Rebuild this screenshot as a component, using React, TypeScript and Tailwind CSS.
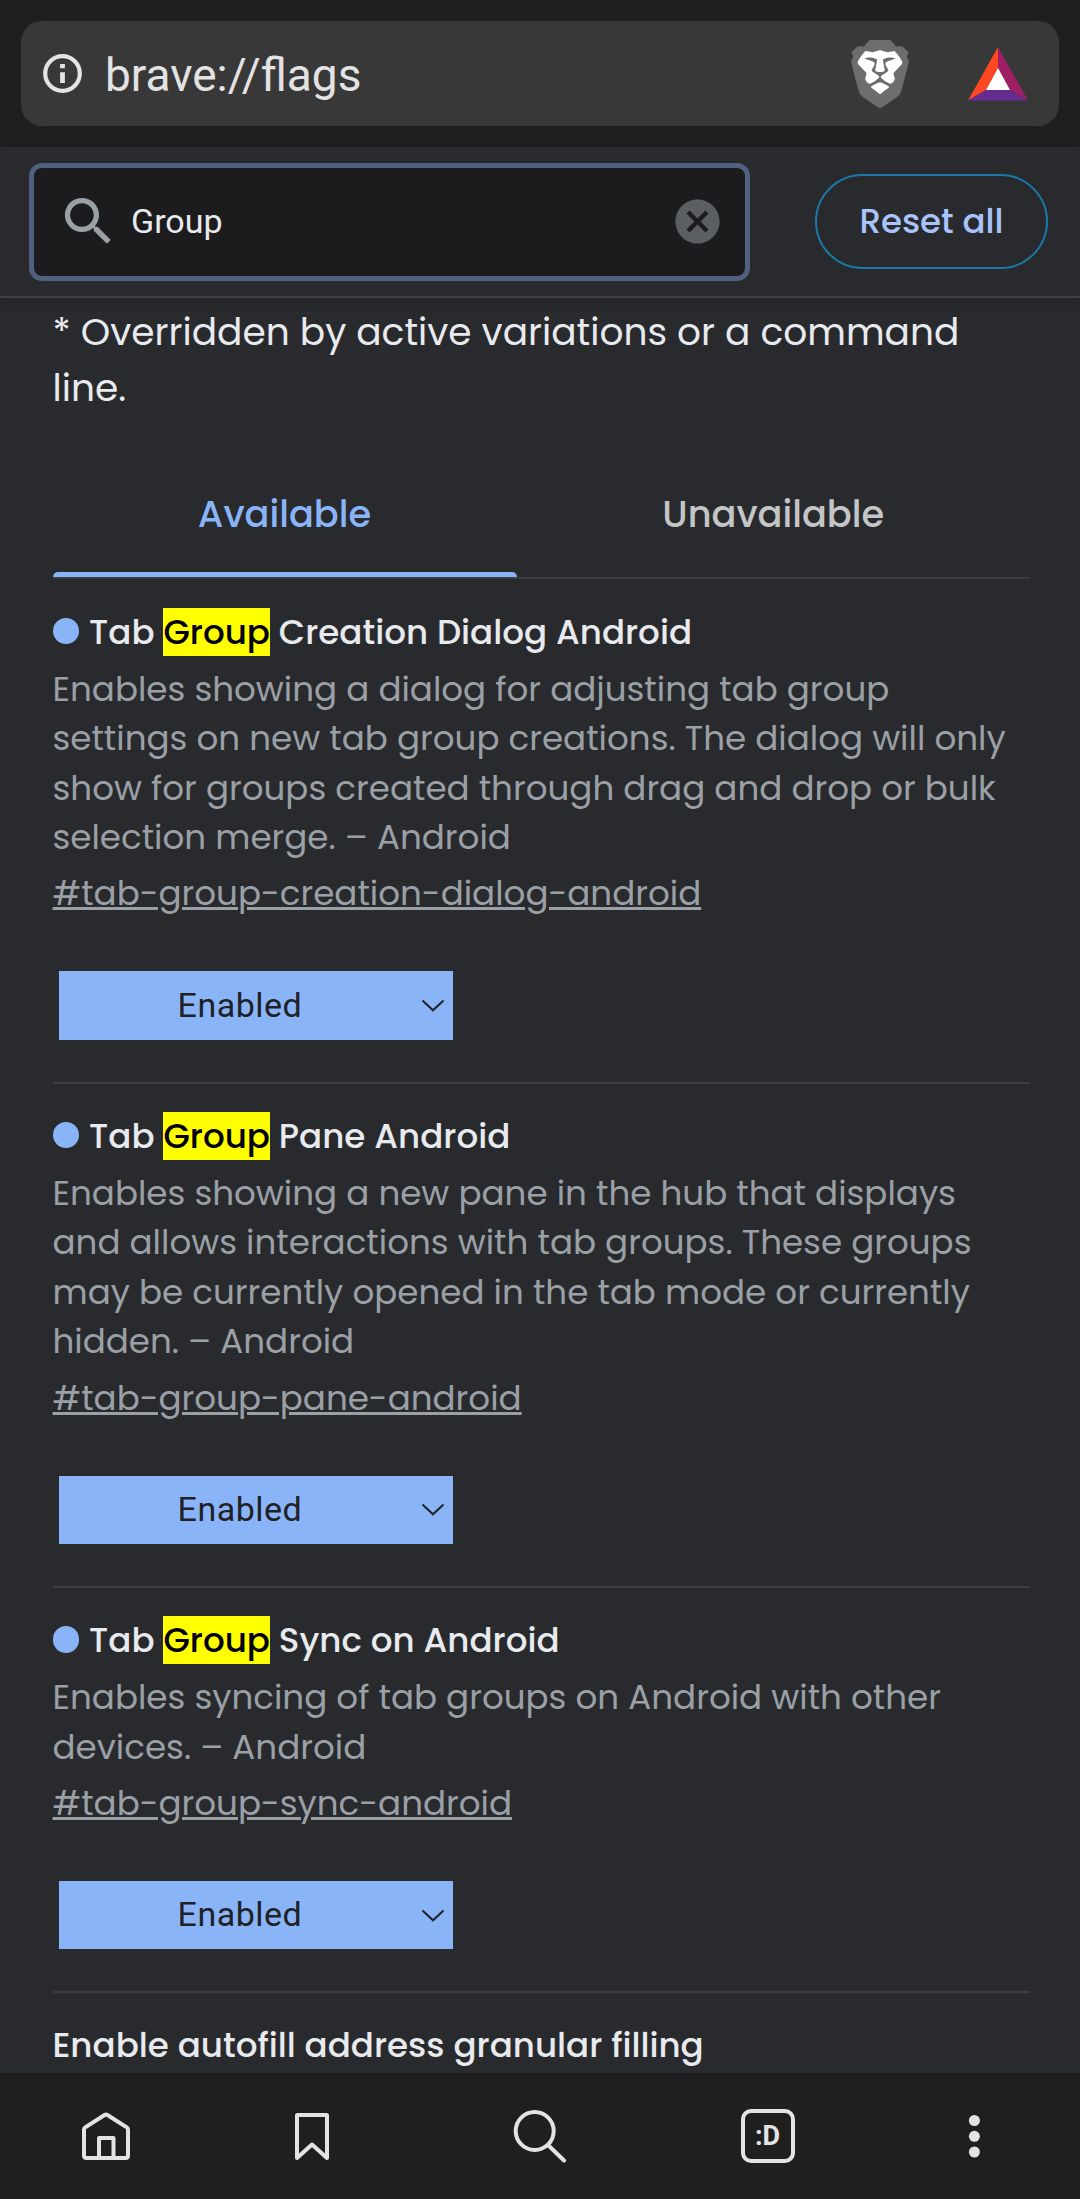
import { FaBrave } from "react-icons/fa6";
import { MdCancel, MdSearch } from "react-icons/md";

type Flag = { suffix: string; lines: string[]; id: string };

const flags: Flag[] = [
  {
    suffix: "Creation Dialog Android",
    lines: [
      "Enables showing a dialog for adjusting tab group",
      "settings on new tab group creations. The dialog will only",
      "show for groups created through drag and drop or bulk",
      "selection merge. – Android",
    ],
    id: "#tab-group-creation-dialog-android",
  },
  {
    suffix: "Pane Android",
    lines: [
      "Enables showing a new pane in the hub that displays",
      "and allows interactions with tab groups. These groups",
      "may be currently opened in the tab mode or currently",
      "hidden. – Android",
    ],
    id: "#tab-group-pane-android",
  },
  {
    suffix: "Sync on Android",
    lines: ["Enables syncing of tab groups on Android with other", "devices. – Android"],
    id: "#tab-group-sync-android",
  },
];

function AddressBar() {
  return (
    <div className="h-[147px] shrink-0 bg-[#1f1f1f] px-[21px] pt-[21px]">
      <div className="flex h-[105px] items-center rounded-[21px] bg-[#383838] pl-[21px] pr-[31px]">
        <svg className="size-[41px]" viewBox="0 0 41 41" fill="none">
          <circle cx="20.5" cy="20.5" r="17.3" stroke="#e3e3e3" strokeWidth="4.2" />
          <path d="M18.1 11h4.8v4.2h-4.8zM18.1 19.3h4.8v10.7h-4.8z" fill="#e3e3e3" />
        </svg>
        <span className="ml-[22px] pt-[3px] font-[Roboto,sans-serif] text-[46px] leading-none text-[#e3e3e3]">
          brave://flags
        </span>
        <div className="relative ml-auto size-[68px]">
          <svg className="absolute inset-0 size-full" viewBox="0 0 24 24">
            <path d="M6 3.2h12l3 4.3-1.8 7.5L12 20.5 4.8 15 3 7.5z" fill="#fff" />
          </svg>
          <FaBrave className="relative size-[68px] text-[#6d6d6d]" />
        </div>
        <svg className="ml-[54px] h-[54px] w-[60px]" viewBox="0 0 60 54">
          <path d="M30 0L0 53.5L18 43L30 21z" fill="#ff4724" />
          <path d="M30 0L60 53.5L42 43L30 21z" fill="#9e1f63" />
          <path d="M0 53.5L18 43h24l18 10.5z" fill="#662d91" />
          <path d="M30 21L42 43H18z" fill="#fff" />
        </svg>
      </div>
    </div>
  );
}

function SearchHeader() {
  return (
    <div className="relative z-10 flex h-[151px] shrink-0 items-start border-b-2 border-[#3e4042] bg-[#292a2d] shadow-[0_2px_10px_rgba(0,0,0,0.18)]">
      <div className="ml-[29px] mt-[15.5px] flex h-[118px] w-[721px] items-center rounded-[13px] border-[5px] border-[#50617f] bg-[#1c1c1e]">
        <MdSearch className="ml-[23px] size-[63px] text-[#9aa0a6]" />
        <span className="ml-[11px] pb-[1px] font-[Roboto,sans-serif] text-[34px] leading-none text-[#e8eaed]">
          Group
        </span>
        <MdCancel className="ml-auto mr-[21px] size-[53px] text-[#5b5e62]" />
      </div>
      <button className="ml-[65px] mt-[27px] h-[95px] w-[233px] rounded-full border-2 border-[#1a7aa8] pb-[2px] text-[34px] font-medium leading-none text-[#a8c4fa]">
        Reset all
      </button>
    </div>
  );
}

function FlagCard({ flag }: { flag: Flag }) {
  return (
    <section className="border-b-2 border-[#3c3d40] pt-[28.1px]">
      <h3 className="flex h-[49.4px] items-center text-[34.125px] font-medium leading-[49.4px] text-[#e8eaed]">
        <span className="mb-[3px] mr-[10.4px] size-[26.2px] rounded-full bg-[#8ab4f8]" />
        <span className="whitespace-pre">
          Tab <mark className="bg-[#ffff00] text-black">Group</mark> {flag.suffix}
        </span>
      </h3>
      <p className="mt-[7.6px] text-[34.125px] leading-[49.48px] text-[#9aa0a6]">
        {flag.lines.map((line) => (
          <span key={line} className="block whitespace-nowrap">
            {line}
          </span>
        ))}
      </p>
      <a className="mt-[6.7px] block h-[49.4px] text-[34.125px] leading-[49.4px] text-[#9aa0a6] underline decoration-[3px]">
        {flag.id}
      </a>
      <div className="mb-[42px] ml-[6.5px] mt-[52.6px] flex h-[68.6px] w-[394px] items-center bg-[#8ab4f8] pl-[118.6px] pr-[8.5px]">
        <span className="pb-[2px] font-[Roboto,sans-serif] text-[34px] leading-none tracking-[0.5px] text-[#202124]">
          Enabled
        </span>
        <svg className="ml-auto h-[13px] w-[24px]" viewBox="0 0 24 13" fill="none">
          <path d="M1.5 1.5L12 11.3L22.5 1.5" stroke="#202124" strokeWidth="2" />
        </svg>
      </div>
    </section>
  );
}

function BottomNav() {
  return (
    <nav className="grid h-[126px] shrink-0 grid-cols-[212px_199px_258px_198px_213px] place-items-center bg-[#1f1f1f] text-[#e3e3e3]">
      <svg className="size-[52px]" viewBox="0 0 52 52" fill="none" stroke="currentColor" strokeWidth="4" strokeLinejoin="round">
        <path d="M4 19.5Q4 18.2 5.2 17.4L24.6 5Q26 4.2 27.4 5L46.8 17.4Q48 18.2 48 19.5V45.5Q48 48 45.5 48H6.5Q4 48 4 45.5z" />
        <path d="M19 48V28h14.5V48" />
      </svg>
      <svg className="h-[52px] w-[36px]" viewBox="0 0 36 52" fill="none" stroke="currentColor" strokeWidth="4" strokeLinejoin="round">
        <path d="M3 5.5Q3 5 3.5 5H32.5Q33 5 33 5.5V48L18 34.5L3 48z" />
      </svg>
      <svg className="size-[54px]" viewBox="0 0 54 54" fill="none" stroke="currentColor" strokeWidth="4" strokeLinecap="round">
        <circle cx="21.7" cy="22" r="19" />
        <path d="M35.5 36.5L51 51.5" />
      </svg>
      <div className="flex size-[54px] items-center justify-center rounded-[10px] border-4 border-[#e3e3e3] pr-[1px] font-[Roboto,sans-serif] text-[27px] font-bold leading-none">
        :D
      </div>
      <svg className="h-[46px] w-[12px]" viewBox="0 0 12 46" fill="currentColor">
        <circle cx="6.4" cy="7.5" r="5.5" />
        <circle cx="6.4" cy="23.3" r="5.5" />
        <circle cx="6.4" cy="39" r="5.5" />
      </svg>
    </nav>
  );
}

export default function App() {
  return (
    <div className="flex h-[2199px] w-[1080px] flex-col overflow-hidden bg-[#292a2d] font-[Poppins,Inter,sans-serif]">
      <AddressBar />
      <SearchHeader />
      <main className="min-h-0 flex-1 overflow-hidden pl-[52.5px] pr-[50px]">
        <p className="pt-[6px] text-[37.53px] leading-[56px] text-[#e8eaed]">
          * Overridden by active variations or a command
          <br />
          line.
        </p>
        <div className="mb-[0.6px] mt-[35px] flex h-[128px] border-b-2 border-[#3c3d40] text-[36.75px] font-medium leading-none">
          <div className="relative flex w-[464px] items-center justify-center text-[#8ab4f8]">
            Available
            <span className="absolute inset-x-0 bottom-0 h-[5px] rounded-t-[5px] bg-[#8ab4f8]" />
          </div>
          <div className="flex flex-1 items-center justify-center text-[#c4c5c7]">Unavailable</div>
        </div>
        {flags.map((flag) => (
          <FlagCard key={flag.id} flag={flag} />
        ))}
        <h3 className="pt-[27.8px] text-[34.125px] font-medium leading-[49.4px] text-[#e8eaed]">
          Enable autofill address granular filling
        </h3>
      </main>
      <BottomNav />
    </div>
  );
}
